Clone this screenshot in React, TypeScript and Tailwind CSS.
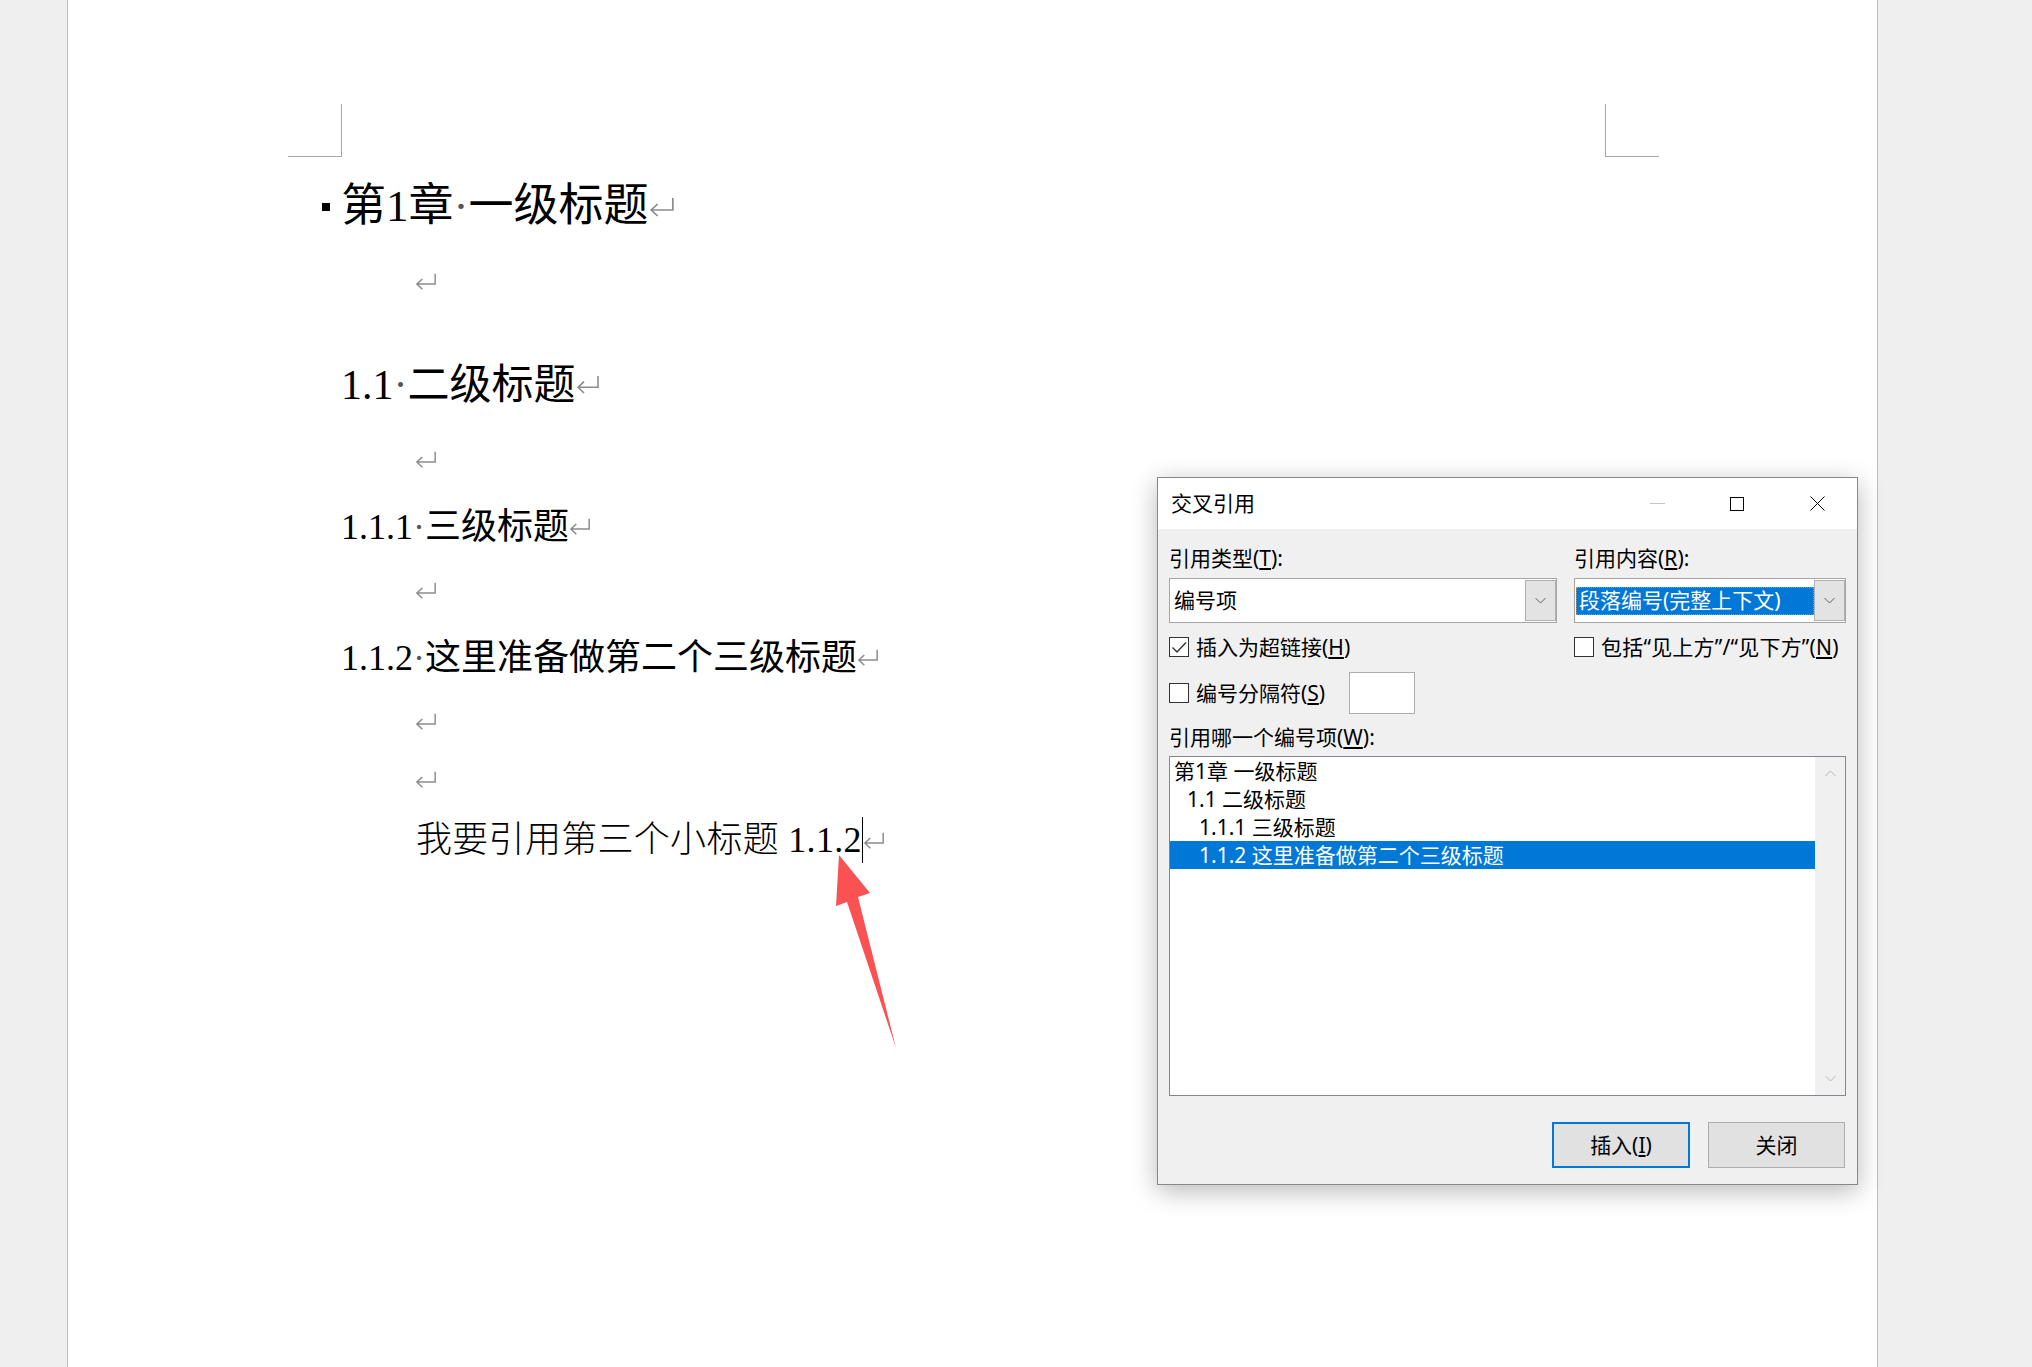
import type { ReactNode } from 'react'

// paragraph mark (↵) as Word draws it
function Ret({ w = 22, h = 17 }: { w?: number; h?: number }) {
  return (
    <svg width={w} height={h} viewBox="0 0 24 20" fill="none" stroke="#8c8c8c" strokeWidth={1.6} preserveAspectRatio="none" className="shrink-0">
      <path d="M22 1V13H2M8 7L2 13L8 19" />
    </svg>
  )
}

function Chevron({ up = false, color = '#606060' }: { up?: boolean; color?: string }) {
  return (
    <svg width="11" height="7" viewBox="0 0 11 7" fill="none" stroke={color} strokeWidth={1}>
      <path d={up ? 'M0.5 6L5.5 1L10.5 6' : 'M0.5 1L5.5 6L10.5 1'} />
    </svg>
  )
}

function Check({ checked = false }: { checked?: boolean }) {
  return (
    <div className="flex h-[20px] w-[20px] shrink-0 items-center justify-center border border-[#333] bg-white">
      {checked && (
        <svg width="18" height="18" viewBox="0 0 18 18" fill="none" stroke="#333" strokeWidth={1.4}>
          <path d="M2.5 9.5L7 14L16 4.5" />
        </svg>
      )}
    </div>
  )
}

function Combo({ children }: { children: ReactNode }) {
  return (
    <div className="flex h-[45px] items-center border border-[#a5a5a5] bg-white">
      {children}
      <div className="flex h-[41px] w-[31px] shrink-0 items-center justify-center border border-[#b0b0b0] bg-[#e3e3e3]">
        <Chevron />
      </div>
    </div>
  )
}

function Dialog() {
  return (
    <div className="absolute left-[1157px] top-[477px] flex h-[708px] w-[701px] flex-col border border-[#888] bg-[#f0f0f0] font-['Noto_Sans','Noto_Sans_CJK_SC',sans-serif] text-[21px] leading-none text-black shadow-[0_6px_24px_rgba(0,0,0,0.28)]">
      {/* title bar */}
      <div className="flex h-[51px] shrink-0 items-center bg-white">
        <div className="flex-1 pl-[13px]">交叉引用</div>
        <div className="flex h-full w-[80px] items-center justify-center">
          <div className="h-px w-[15px] bg-[#c4c4c4]" />
        </div>
        <div className="flex h-full w-[80px] items-center justify-center">
          <div className="h-[14px] w-[14px] border border-black" />
        </div>
        <div className="flex h-full w-[80px] items-center justify-center">
          <svg width="15" height="15" viewBox="0 0 15 15" stroke="#000" strokeWidth={1}>
            <path d="M0.5 0.5L14.5 14.5M14.5 0.5L0.5 14.5" />
          </svg>
        </div>
      </div>

      <div className="flex flex-1 flex-col pl-[11px] pr-[10px]">
        <div className="mt-[15px] flex h-[28px] gap-[17px]">
          <div className="flex w-[388px] items-center">
            引用类型(<u>T</u>):
          </div>
          <div className="flex w-[272px] items-center">
            引用内容(<u>R</u>):
          </div>
        </div>

        <div className="mt-[6px] flex gap-[17px]">
          <div className="w-[388px]">
            <Combo>
              <div className="flex-1 pl-[4px]">编号项</div>
            </Combo>
          </div>
          <div className="w-[272px]">
            <Combo>
              <div className="ml-[1px] flex h-[28px] flex-1 items-center bg-[#0078d7] pl-[3px] text-white outline-1 -outline-offset-1 outline-dotted outline-[#d9873f]">
                段落编号(完整上下文)
              </div>
            </Combo>
          </div>
        </div>

        <div className="mt-[10px] flex h-[28px] gap-[17px]">
          <div className="flex w-[388px] items-center gap-[7px]">
            <Check checked />
            <span>
              插入为超链接(<u>H</u>)
            </span>
          </div>
          <div className="flex w-[272px] items-center gap-[7px]">
            <Check />
            <span className="whitespace-nowrap tracking-[0.2px]">
              包括“见上方”/“见下方”(<u>N</u>)
            </span>
          </div>
        </div>

        <div className="mt-[11px] flex h-[42px] items-center">
          <div className="flex w-[180px] items-center gap-[7px]">
            <Check />
            <span>
              编号分隔符(<u>S</u>)
            </span>
          </div>
          <div className="h-[42px] w-[66px] border border-[#adadad] bg-white" />
        </div>

        <div className="mt-[9px] flex h-[28px] items-center">
          引用哪一个编号项(<u>W</u>):
        </div>

        <div className="mt-[5px] flex h-[340px] w-[677px] border border-[#828790] bg-white">
          <div className="flex flex-1 flex-col">
            <div className="flex h-[28px] items-center pl-[4px]">第1章 一级标题</div>
            <div className="flex h-[28px] items-center pl-[17px]">1.1 二级标题</div>
            <div className="flex h-[28px] items-center pl-[29px]">1.1.1 三级标题</div>
            <div className="flex h-[28px] items-center bg-[#0078d7] pl-[29px] text-white">1.1.2 这里准备做第二个三级标题</div>
          </div>
          <div className="flex w-[30px] flex-col items-center justify-between bg-[#f0f0f0] py-[13px]">
            <Chevron up color="#b4b4b4" />
            <Chevron color="#b4b4b4" />
          </div>
        </div>

        <div className="mt-[26px] flex justify-end gap-[18px] pr-[2px]">
          <div className="flex h-[46px] w-[138px] items-center justify-center border-2 border-[#0078d7] bg-[#e1e1e1]">
            插入(<u>I</u>)
          </div>
          <div className="flex h-[46px] w-[137px] items-center justify-center border border-[#adadad] bg-[#e1e1e1]">关闭</div>
        </div>
      </div>
    </div>
  )
}

export default function App() {
  return (
    <div className="relative flex h-[1367px] w-[2032px] overflow-hidden bg-[#efefef]">
      <div className="w-[67px] shrink-0" />

      {/* page */}
      <div className="flex h-full w-[1811px] shrink-0 flex-col border-x border-[#bdbdbd] bg-white">
        <div className="flex justify-between pl-[220px] pr-[218px] pt-[104px]">
          <div className="h-[53px] w-[54px] border-b border-r border-[#a6a6a6]" />
          <div className="h-[53px] w-[54px] border-b border-l border-[#a6a6a6]" />
        </div>

        <div className="flex flex-col pl-[273px] font-['Liberation_Serif','Noto_Sans_CJK_SC',serif] leading-none text-black">
          <div className="mt-[25px] flex h-[44px] items-center pt-[5px] text-[45px]">
            <span className="-ml-[19px] mr-[11px] h-[8px] w-[8px] bg-black" />
            <span>第1章</span>
            <span className="text-[#555]">·</span>
            <span>一级标题</span>
            <Ret w={26} h={20} />
          </div>
          <div className="mt-[33px] flex h-[44px] items-center pl-[74px]">
            <Ret />
          </div>
          <div className="mt-[57px] flex h-[44px] items-center pt-[5px] text-[42px]">
            <span>1.1</span>
            <span className="text-[#555]">·</span>
            <span>二级标题</span>
            <Ret w={24} h={19} />
          </div>
          <div className="mt-[33px] flex h-[44px] items-center pl-[74px]">
            <Ret />
          </div>
          <div className="mt-[22px] flex h-[44px] items-center pt-[3px] text-[36px]">
            <span>1.1.1</span>
            <span className="text-[#555]">·</span>
            <span>三级标题</span>
            <Ret />
          </div>
          <div className="mt-[21px] flex h-[44px] items-center pl-[74px]">
            <Ret />
          </div>
          <div className="mt-[22px] flex h-[44px] items-center pt-[3px] text-[36px]">
            <span>1.1.2</span>
            <span className="text-[#555]">·</span>
            <span>这里准备做第二个三级标题</span>
            <Ret />
          </div>
          <div className="mt-[21px] flex h-[44px] items-center pl-[74px]">
            <Ret />
          </div>
          <div className="mt-[14px] flex h-[44px] items-center pl-[74px]">
            <Ret />
          </div>
          <div className="mt-[15px] flex h-[44px] items-center pl-[75px] pt-[4px] text-[36px] font-light">
            <span className="whitespace-pre tracking-[0.3px]">我要引用第三个小标题 1.1.2</span>
            <span className="h-[46px] w-px bg-black" />
            <Ret />
          </div>
        </div>
      </div>

      {/* red annotation arrow */}
      <svg className="absolute left-[830px] top-[850px]" width="75" height="205" viewBox="0 0 75 205">
        <polygon points="9,5 40,43 28,47 66,198 17,52 6,56" fill="#fa5252" />
      </svg>

      <Dialog />
    </div>
  )
}
